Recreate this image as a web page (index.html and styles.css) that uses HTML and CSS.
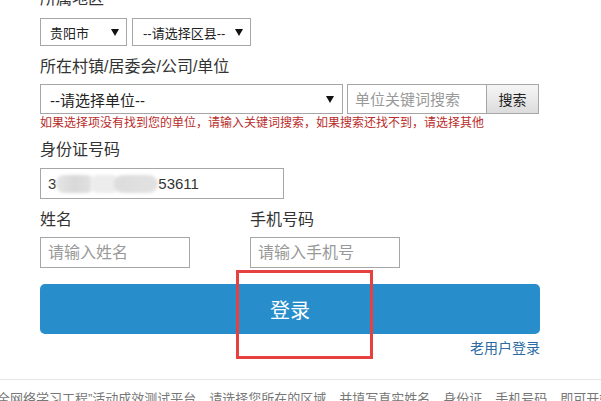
FILE: index.html
```html
<!DOCTYPE html>
<html lang="zh-CN">
<head>
<meta charset="utf-8">
<title>登录</title>
<link rel="stylesheet" href="styles.css">
</head>
<body>
<div class="page">
  <div class="form">
    <div class="label first">所属地区</div>
    <div class="row r1">
      <div class="sel sel-city"><span>贵阳市</span><span class="arrow"></span></div>
      <div class="sel sel-district"><span>--请选择区县--</span><span class="arrow"></span></div>
    </div>
    <div class="label l2">所在村镇/居委会/公司/单位</div>
    <div class="row r2">
      <div class="sel sel-unit"><span>--请选择单位--</span><span class="arrow"></span></div>
      <input class="kw" type="text" placeholder="单位关键词搜索">
      <button class="search" type="button">搜索</button>
    </div>
    <div class="hint">如果选择项没有找到您的单位，请输入关键词搜索，如果搜索还找不到，请选择其他</div>
    <div class="label l3">身份证号码</div>
    <div class="idbox"><span>3</span><span class="blur"><i class="b1"></i><i class="b2"></i><i class="b3"></i></span><span>53611</span></div>
    <div class="pair">
      <div class="field">
        <div class="label">姓名</div>
        <input class="txt" type="text" placeholder="请输入姓名">
      </div>
      <div class="field">
        <div class="label">手机号码</div>
        <input class="txt" type="text" placeholder="请输入手机号">
      </div>
    </div>
    <button class="login" type="button">登录</button>
    <div class="old"><a href="#">老用户登录</a></div>
  </div>
  <div class="footer">
    <p>全网络学习工程”活动成效测试平台，请选择您所在的区域，并填写真实姓名、身份证、手机号码，即可开始测试</p>
  </div>
  <div class="annot"></div>
</div>
</body>
</html>
```

FILE: styles.css
```css
* { box-sizing: border-box; }
html, body { margin: 0; padding: 0; background: #fff; }
body {
  font-family: "Liberation Sans", "Noto Sans CJK SC", sans-serif;
  color: #333;
  overflow: hidden;
}
.page { position: relative; display: flow-root; width: 601px; height: 401px; overflow: hidden; }
.form { margin-left: 40px; width: 500px; }
.label { font-size: 16px; line-height: 20px; color: #333; }
.first { margin-top: -11px; }
.row { display: flex; }
.r1 { margin-top: 9px; height: 28px; gap: 5px; }
.sel {
  border: 1px solid #a6a6a6;
  background: #fff;
  display: flex;
  align-items: center;
  justify-content: space-between;
  color: #222;
  height: 100%;
}
.sel-city { width: 87px; padding: 0 7px 0 9px; font-size: 13px; }
.sel-district { width: 119px; padding: 0 7px 0 10px; font-size: 13px; }
.arrow {
  width: 0; height: 0;
  border-left: 4px solid transparent;
  border-right: 4px solid transparent;
  border-top: 7px solid #111;
}
.l2 { margin-top: 11px; }
.r2 { margin-top: 7px; height: 30px; }
.sel-unit { width: 303px; padding: 0 8px 0 9px; font-size: 15px; }
.kw {
  margin-left: 4px;
  width: 140px;
  height: 30px;
  border: 1px solid #a6a6a6;
  padding: 0 7px;
  font: 15px "Liberation Sans", "Noto Sans CJK SC", sans-serif;
  outline: none;
}
.kw::placeholder, .txt::placeholder { color: #999; }
.search {
  width: 52px;
  height: 30px;
  border: 1px solid #a6a6a6;
  border-left: none;
  background: linear-gradient(#f6f6f6, #dcdcdc);
  font: 14px "Liberation Sans", "Noto Sans CJK SC", sans-serif;
  color: #222;
  padding: 0;
}
.hint { margin-top: 1px; font-size: 12px; line-height: 16px; color: #b92d2b; white-space: nowrap; }
.l3 { margin-top: 9px; }
.idbox {
  margin-top: 8px;
  width: 244px;
  height: 31px;
  border: 1px solid #a6a6a6;
  padding-left: 7px;
  font-size: 15px;
  line-height: 29px;
  color: #333;
  display: flex;
  align-items: center;
}
.blur {
  position: relative;
  display: inline-block;
  width: 105px;
  height: 22px;
  margin: 0 -1px 0 -2px;
}
.blur i {
  position: absolute;
  top: 2px;
  height: 18px;
  border-radius: 8px;
  filter: blur(1.5px);
}
.blur .b1 { left: 2px; width: 38px; background: linear-gradient(90deg, #e6e6e6, #d8d8d8 50%, #e2e2e2); }
.blur .b2 { left: 36px; width: 30px; background: #ececec; }
.blur .b3 { left: 60px; width: 44px; background: linear-gradient(90deg, #dcdcdc, #e2e2e2); border-radius: 10px; }
.pair { margin-top: 11px; display: flex; gap: 60px; }
.field { width: 150px; }
.txt {
  display: block;
  margin-top: 7px;
  width: 150px;
  height: 31px;
  border: 1px solid #a6a6a6;
  padding: 0 7px;
  font: 16px "Liberation Sans", "Noto Sans CJK SC", sans-serif;
  outline: none;
}
.login {
  display: block;
  margin-top: 16px;
  width: 500px;
  height: 50px;
  border: none;
  border-radius: 5px;
  background: #278ecb;
  color: #fff;
  font: 20px "Liberation Sans", "Noto Sans CJK SC", sans-serif;
  padding: 0;
}
.old { margin-top: 5px; text-align: right; font-size: 14px; line-height: 18px; }
.old a { color: #2b6aa3; text-decoration: none; }
.footer { margin-top: 22px; border-top: 1px solid #e6e6e6; }
.footer p {
  margin: 9px 0 0 -3px;
  font-size: 13px;
  line-height: 20px;
  color: #777;
  white-space: nowrap;
}
.annot {
  position: absolute;
  left: 236px;
  top: 270px;
  width: 137px;
  height: 89px;
  border: 3px solid #e6403f;
}
```
